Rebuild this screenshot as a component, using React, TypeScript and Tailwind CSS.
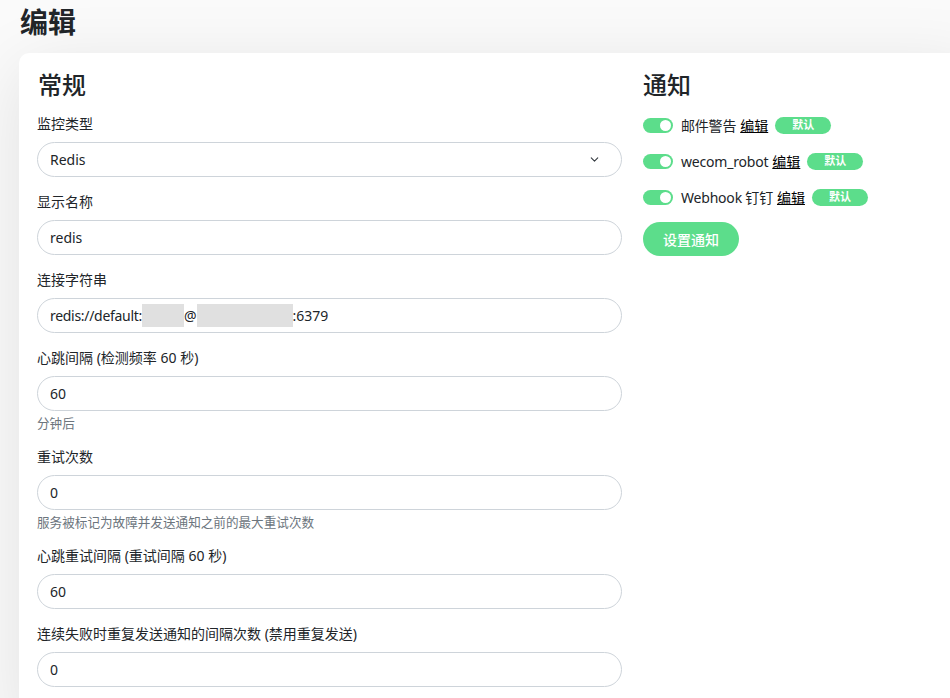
import React from "react";
import { ChevronDown } from "lucide-react";

const font = { fontFamily: '"Noto Sans", "Noto Sans CJK SC", sans-serif' };

const Field = ({
  label,
  value,
  help,
  select,
}: {
  label: string;
  value: React.ReactNode;
  help?: string;
  select?: boolean;
}) => (
  <div className="mb-[14px]">
    <div className="text-[14px] leading-[21px] mb-2 text-[#212529]">{label}</div>
    <div className="h-[35px] rounded-full border border-[#ced4da] bg-white flex items-center pl-3 pr-5 text-[14px] text-[#212529]">
      <span className="flex-1 flex items-center">{value}</span>
      {select && <ChevronDown size={13} strokeWidth={2} className="text-[#343a40]" />}
    </div>
    {help && <div className="mt-1 text-[12.6px] leading-[17px] text-[#6c757d]">{help}</div>}
  </div>
);

const Notify = ({ name }: { name: string }) => (
  <div className="h-[36px] flex items-center text-[14px] text-[#212529]">
    <span className="w-[30px] h-[15px] rounded-full bg-[#5cdd8b] flex items-center justify-end pr-[2px] mr-2">
      <span className="w-[11px] h-[11px] rounded-full bg-white" />
    </span>
    <span className="tracking-[-0.2px]">{name}</span>
    <span className="ml-1 underline text-black">编辑</span>
    <span className="ml-[7px] w-[56px] h-[17px] rounded-full bg-[#5cdd8b] text-white text-[11px] font-bold flex items-center justify-center">
      默认
    </span>
  </div>
);

export default function App() {
  return (
    <div style={font} className="min-h-[698px] bg-[#fafafa] pl-[19px] overflow-hidden">
      <h1 className="text-[28px] leading-[34px] font-semibold text-[#212529] pt-[5px] pl-[1px] mb-[14px]">编辑</h1>
      <div className="bg-white rounded-[10px] shadow-[0_15px_70px_rgba(0,0,0,0.1)] w-[960px] pt-[17px] pl-[18px] pb-6 flex gap-[21px]">
        <div className="w-[585px]">
          <h2 className="text-[24px] leading-[29px] font-medium text-[#212529] pl-[1px] mb-[14px]">常规</h2>
          <Field label="监控类型" value="Redis" select />
          <Field label="显示名称" value="redis" />
          <Field
            label="连接字符串"
            value={
              <>
                <span className="tracking-[-0.3px]">redis://default:</span>
                <span className="inline-block w-[42px] h-[23px] bg-[#e0e0e0]" />
                @
                <span className="inline-block w-[96px] h-[23px] bg-[#e0e0e0]" />
                :6379
              </>
            }
          />
          <Field label="心跳间隔 (检测频率 60 秒)" value="60" help="分钟后" />
          <Field label="重试次数" value="0" help="服务被标记为故障并发送通知之前的最大重试次数" />
          <Field label="心跳重试间隔 (重试间隔 60 秒)" value="60" />
          <Field label="连续失败时重复发送通知的间隔次数 (禁用重复发送)" value="0" />
        </div>
        <div className="flex-1">
          <h2 className="text-[24px] leading-[29px] font-medium text-[#212529] mb-2">通知</h2>
          <Notify name="邮件警告" />
          <Notify name="wecom_robot" />
          <Notify name="Webhook 钉钉" />
          <button className="mt-[7px] w-[96px] h-[34px] rounded-full bg-[#5cdd8b] text-white text-[14px] font-medium">
            设置通知
          </button>
        </div>
      </div>
    </div>
  );
}
